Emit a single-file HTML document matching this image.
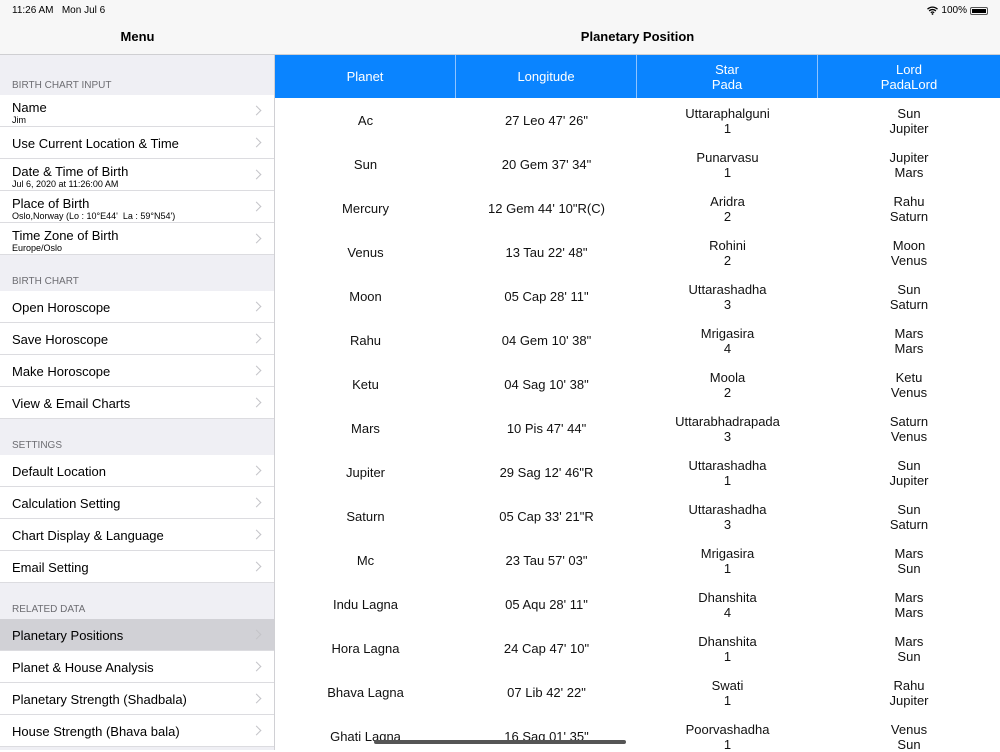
<!DOCTYPE html>
<html><head><meta charset="utf-8"><style>
*{margin:0;padding:0;box-sizing:border-box}
body{width:1000px;height:750px;overflow:hidden;font-family:"Liberation Sans",sans-serif;background:#fff;position:relative;color:#000}
#side{position:absolute;left:0;top:0;width:275px;height:750px;background:#efeff4;border-right:1px solid #d0d0d4}
.nav{position:absolute;top:0;height:55px;background:#f7f7f7;border-bottom:1px solid #cfcfd2}
.sb{position:absolute;top:5px;font-size:10px}
.title{position:absolute;top:29px;width:100%;text-align:center;font-size:13px;font-weight:bold}
.hdr{position:absolute;left:12px;font-size:10px;color:#6d6d72}
.row{position:absolute;left:0;width:274px;height:32px;background:#fff;border-bottom:1px solid #dcdce0}
.row .t{position:absolute;left:12px;font-size:13px}
.row .s{position:absolute;left:12px;top:20px;font-size:9px}
.row .c{position:absolute;right:14px;top:12px;width:7px;height:7px;border-right:1.3px solid #c4c4c8;border-top:1.3px solid #c4c4c8;transform:rotate(45deg)}
#main{position:absolute;left:275px;top:0;width:725px;height:750px}
.th{position:absolute;top:55px;height:43px;background:#0a84ff;color:#fff;font-size:13px;text-align:center;display:flex;align-items:center;justify-content:center;line-height:15px;border-right:1px solid #8ec3ff}
.cell{position:absolute;font-size:13px;text-align:center;line-height:15px;color:#111}
</style></head><body>
<div id="side">
<div class="nav" style="left:0;width:275px"><div class="sb" style="left:12px">11:26 AM&nbsp;&nbsp; Mon Jul 6</div><div class="title">Menu</div></div>
<div class="hdr" style="top:80px">BIRTH CHART INPUT</div>
<div class="row" style="top:95px"><div class="t" style="top:5px">Name</div><div class="s">Jim</div><div class="c"></div></div>
<div class="row" style="top:127px"><div class="t" style="top:9px">Use Current Location &amp; Time</div><div class="c"></div></div>
<div class="row" style="top:159px"><div class="t" style="top:5px">Date &amp; Time of Birth</div><div class="s">Jul 6, 2020 at 11:26:00 AM</div><div class="c"></div></div>
<div class="row" style="top:191px"><div class="t" style="top:5px">Place of Birth</div><div class="s">Oslo,Norway (Lo : 10°E44'&nbsp; La : 59°N54')</div><div class="c"></div></div>
<div class="row" style="top:223px"><div class="t" style="top:5px">Time Zone of Birth</div><div class="s">Europe/Oslo</div><div class="c"></div></div>
<div class="hdr" style="top:276px">BIRTH CHART</div>
<div class="row" style="top:291px"><div class="t" style="top:9px">Open Horoscope</div><div class="c"></div></div>
<div class="row" style="top:323px"><div class="t" style="top:9px">Save Horoscope</div><div class="c"></div></div>
<div class="row" style="top:355px"><div class="t" style="top:9px">Make Horoscope</div><div class="c"></div></div>
<div class="row" style="top:387px"><div class="t" style="top:9px">View &amp; Email Charts</div><div class="c"></div></div>
<div class="hdr" style="top:440px">SETTINGS</div>
<div class="row" style="top:455px"><div class="t" style="top:9px">Default Location</div><div class="c"></div></div>
<div class="row" style="top:487px"><div class="t" style="top:9px">Calculation Setting</div><div class="c"></div></div>
<div class="row" style="top:519px"><div class="t" style="top:9px">Chart Display &amp; Language</div><div class="c"></div></div>
<div class="row" style="top:551px"><div class="t" style="top:9px">Email Setting</div><div class="c"></div></div>
<div class="hdr" style="top:604px">RELATED DATA</div>
<div class="row" style="top:619px;background:#d1d1d6"><div class="t" style="top:9px">Planetary Positions</div><div class="c"></div></div>
<div class="row" style="top:651px"><div class="t" style="top:9px">Planet &amp; House Analysis</div><div class="c"></div></div>
<div class="row" style="top:683px"><div class="t" style="top:9px">Planetary Strength (Shadbala)</div><div class="c"></div></div>
<div class="row" style="top:715px"><div class="t" style="top:9px">House Strength (Bhava bala)</div><div class="c"></div></div>
</div>
<div id="main">
<div class="nav" style="left:0;width:725px"><div class="sb" style="right:12px;display:flex;align-items:center;gap:3px"><svg width="11" height="9" viewBox="0 0 11 9"><path d="M0.5 3.2A7 7 0 0 1 10.5 3.2M2.2 5A4.5 4.5 0 0 1 8.8 5M3.9 6.8A2 2 0 0 1 7.1 6.8" stroke="#000" stroke-width="1.3" fill="none"/><circle cx="5.5" cy="8" r="0.9"/></svg>100%<span style="display:inline-block;width:18px;height:8px;border:1px solid #555;border-radius:2px;padding:1px"><span style="display:block;width:100%;height:100%;background:#000"></span></span></div><div class="title">Planetary Position</div></div>
<div class="th" style="left:0;width:181px">Planet</div>
<div class="th" style="left:181px;width:181px">Longitude</div>
<div class="th" style="left:362px;width:181px">Star<br>Pada</div>
<div class="th" style="left:543px;width:182px;border-right:none">Lord<br>PadaLord</div>
<div id="rows"></div>
<div style="position:absolute;left:99px;top:740px;width:252px;height:4px;border-radius:2px;background:#555"></div>
</div>
<script>
var d=[["Ac","27 Leo 47' 26\"","Uttaraphalguni","1","Sun","Jupiter"],["Sun","20 Gem 37' 34\"","Punarvasu","1","Jupiter","Mars"],["Mercury","12 Gem 44' 10\"R(C)","Aridra","2","Rahu","Saturn"],["Venus","13 Tau 22' 48\"","Rohini","2","Moon","Venus"],["Moon","05 Cap 28' 11\"","Uttarashadha","3","Sun","Saturn"],["Rahu","04 Gem 10' 38\"","Mrigasira","4","Mars","Mars"],["Ketu","04 Sag 10' 38\"","Moola","2","Ketu","Venus"],["Mars","10 Pis 47' 44\"","Uttarabhadrapada","3","Saturn","Venus"],["Jupiter","29 Sag 12' 46\"R","Uttarashadha","1","Sun","Jupiter"],["Saturn","05 Cap 33' 21\"R","Uttarashadha","3","Sun","Saturn"],["Mc","23 Tau 57' 03\"","Mrigasira","1","Mars","Sun"],["Indu Lagna","05 Aqu 28' 11\"","Dhanshita","4","Mars","Mars"],["Hora Lagna","24 Cap 47' 10\"","Dhanshita","1","Mars","Sun"],["Bhava Lagna","07 Lib 42' 22\"","Swati","1","Rahu","Jupiter"],["Ghati Lagna","16 Sag 01' 35\"","Poorvashadha","1","Venus","Sun"]];
var h="";d.forEach(function(r,i){var y=99+i*44+22;
h+='<div class="cell" style="left:0;width:181px;top:'+(y-8)+'px">'+r[0]+'</div>';
h+='<div class="cell" style="left:181px;width:181px;top:'+(y-8)+'px">'+r[1]+'</div>';
h+='<div class="cell" style="left:362px;width:181px;top:'+(y-15)+'px">'+r[2]+'<br>'+r[3]+'</div>';
h+='<div class="cell" style="left:543px;width:182px;top:'+(y-15)+'px">'+r[4]+'<br>'+r[5]+'</div>';});
document.getElementById("rows").innerHTML=h;
</script>
</body></html>
